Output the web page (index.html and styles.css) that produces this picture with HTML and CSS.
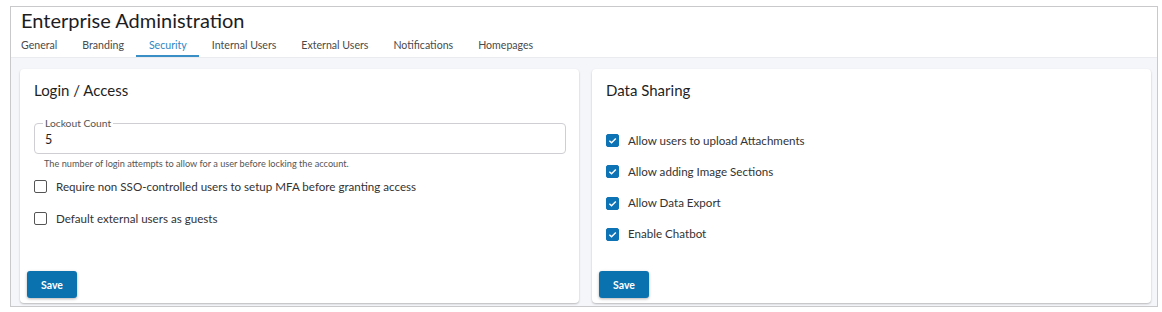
FILE: index.html
```html
<!DOCTYPE html>
<html lang="en">

<head>
    <meta charset="UTF-8">
    <meta name="viewport" content="width=device-width, initial-scale=1.0">
    <title>Enterprise Administration</title>
    <link rel="stylesheet" href="styles.css">
</head>

<body>
    <div class="frame">
        <div class="top">
            <h1>Enterprise Administration</h1>
            <nav class="tabs">
                <a>General</a>
                <a>Branding</a>
                <a class="active">Security</a>
                <a>Internal Users</a>
                <a>External Users</a>
                <a>Notifications</a>
                <a>Homepages</a>
            </nav>
        </div>
        <div class="content">
            <section class="card">
                <h2>Login / Access</h2>
                <fieldset class="field">
                    <legend>Lockout Count</legend>
                    <span class="value">5</span>
                </fieldset>
                <p class="hint">The number of login attempts to allow for a user before locking the account.</p>
                <label class="check"><span class="box"></span>Require non SSO-controlled users to setup MFA before granting access</label>
                <label class="check"><span class="box"></span>Default external users as guests</label>
                <div class="foot"><button>Save</button></div>
            </section>
            <section class="card">
                <h2>Data Sharing</h2>
                <div class="list">
                    <label class="check"><span class="box on"><svg viewBox="0 0 14 14"><path d="M3 7.2 L5.8 10 L11.2 4.4" /></svg></span>Allow users to upload Attachments</label>
                    <label class="check"><span class="box on"><svg viewBox="0 0 14 14"><path d="M3 7.2 L5.8 10 L11.2 4.4" /></svg></span>Allow adding Image Sections</label>
                    <label class="check"><span class="box on"><svg viewBox="0 0 14 14"><path d="M3 7.2 L5.8 10 L11.2 4.4" /></svg></span>Allow Data Export</label>
                    <label class="check"><span class="box on"><svg viewBox="0 0 14 14"><path d="M3 7.2 L5.8 10 L11.2 4.4" /></svg></span>Enable Chatbot</label>
                </div>
                <div class="foot"><button>Save</button></div>
            </section>
        </div>
    </div>
</body>

</html>
```

FILE: styles.css
```css
body {
    margin: 0;
    padding: 6px 4px 0 10px;
    background: #fff;
    font-family: 'Lato', 'Noto Sans', sans-serif;
    color: #222;
}

.frame {
    border: 1px solid #c9c9cb;
    height: 301px;
    box-sizing: border-box;
    display: flex;
    flex-direction: column;
}

.top {
    background: #fff;
    border-bottom: 1px solid #e9ebef;
    padding: 0 0 0 10px;
}

h1 {
    margin: 0;
    font-size: 20px;
    font-weight: 400;
    line-height: 26px;
    color: #1d1d1f;
}

.tabs {
    display: flex;
    height: 24px;
}

.tabs a {
    padding: 3px 12.5px 0;
    font-size: 10.6px;
    line-height: 19px;
    height: 19px;
    color: #4a4a4a;
}

.tabs a:first-child {
    padding-left: 0;
}

.tabs a.active {
    color: #2f86c4;
    border-bottom: 2px solid #3a8fc7;
}

.content {
    flex: 1;
    background: #f5f6f9;
    display: flex;
    gap: 13px;
    padding: 11px 6px 3px 9px;
}

.card {
    flex: 1;
    background: #fff;
    border-radius: 4px;
    box-shadow: 0 1px 2px rgba(0, 0, 0, 0.25);
    padding: 12px 13px 5px 13px;
    display: flex;
    flex-direction: column;
}

h2 {
    margin: 0 0 0 1px;
    font-size: 15px;
    font-weight: 400;
    line-height: 18px;
    color: #1f1f1f;
}

.field {
    margin: 19px 0 0 1px;
    border: 1px solid #cfcfd3;
    border-radius: 4px;
    padding: 0 10px 5px;
    height: 36px;
    box-sizing: border-box;
}

.field legend {
    font-size: 10.3px;
    color: #555;
    padding: 0 2px;
    margin-left: -2px;
    line-height: 10px;
}

.value {
    display: block;
    font-size: 12.5px;
    line-height: 16px;
    color: #222;
    margin-top: 4px;
}

.hint {
    margin: 4px 0 0 11px;
    font-size: 9.2px;
    color: #555;
    line-height: 12px;
}

.check {
    display: flex;
    align-items: center;
    font-size: 11.6px;
    color: #333;
    margin: 10px 0 8px 1px;
    line-height: 12px;
}

.card .check + .check {
    margin-top: 11px;
}

.box {
    width: 11px;
    height: 11px;
    border: 1.5px solid #555;
    border-radius: 2px;
    margin-right: 9px;
    flex: none;
}

.box.on {
    background: #0d73b5;
    border-color: #0d73b5;
}

.box svg {
    display: block;
    width: 11px;
    height: 11px;
}

.box path {
    fill: none;
    stroke: #fff;
    stroke-width: 1.8;
}

.list {
    margin-top: 35px;
}

.list .check {
    margin: 0 0 18.3px 1px;
}

.list .check + .check {
    margin-top: 0;
}

.foot {
    margin-top: auto;
}

button {
    background: #0b72b0;
    color: #fff;
    border: none;
    border-radius: 3px;
    font-family: inherit;
    font-size: 10.5px;
    font-weight: 700;
    width: 50px;
    height: 27px;
    margin-left: -6px;
    box-shadow: 0 1px 3px rgba(0, 0, 0, 0.3);
}
```
